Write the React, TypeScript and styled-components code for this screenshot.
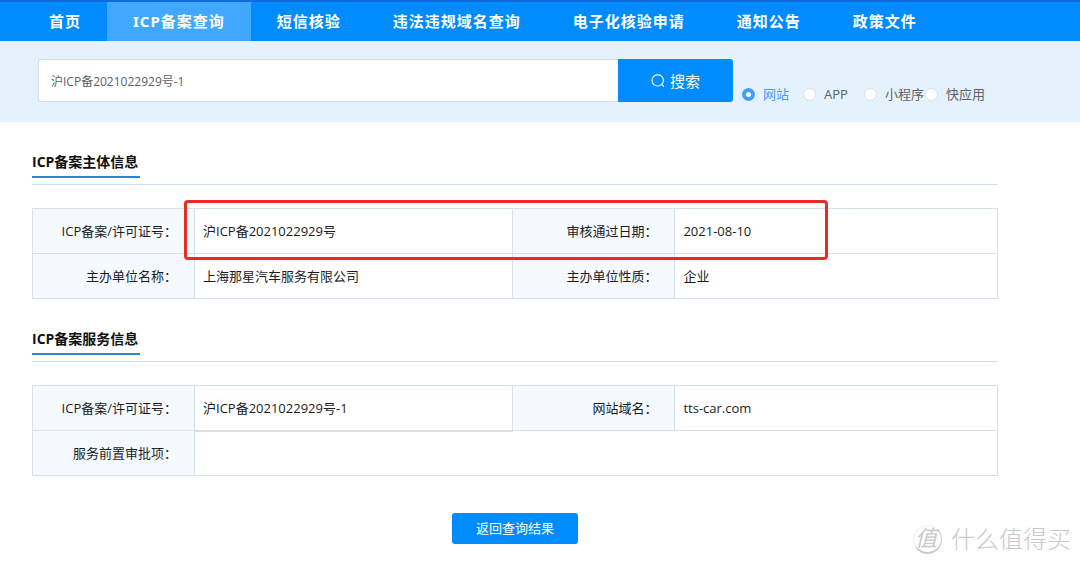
import React from 'react';
import styled, { createGlobalStyle } from 'styled-components';

const GlobalStyle = createGlobalStyle`
  *, *::before, *::after { box-sizing: border-box; }
  body {
    margin: 0;
    background: #fff;
    color: #1c1c1c;
    font: 13px/20px "Open Sans", "Noto Sans CJK SC", sans-serif;
  }
  button, input { font-family: inherit; }
`;

const Page = styled.div`
  position: relative;
  padding-bottom: 20px;
`;

const Nav = styled.nav`
  display: flex;
  height: 41px;
  padding-left: 23px;
  border-top: 2px solid #0c6cdc;
  background: #008cff;
`;

const NavLink = styled.a<{ $active?: boolean }>`
  padding: 0 26px;
  color: #fff;
  background: ${(p) => (p.$active ? '#40a9ff' : 'transparent')};
  font-family: "Noto Sans", "Noto Sans CJK SC", sans-serif;
  font-size: 15px;
  font-weight: 700;
  line-height: 38px;
  letter-spacing: 1px;
  white-space: nowrap;
  text-decoration: none;
`;

const SearchBar = styled.form`
  display: flex;
  align-items: flex-end;
  padding: 18px 94px 20px 38px;
  background: #e4f2fe;
`;

const SearchInput = styled.input`
  flex: 1;
  min-width: 0;
  height: 43px;
  padding: 0 12px;
  border: 1px solid #d9dde2;
  border-right: 0;
  border-radius: 3px 0 0 3px;
  background: #fff;
  color: #5c5f66;
  font-size: 12px;
`;

const SearchButton = styled.button`
  display: flex;
  align-items: center;
  justify-content: center;
  gap: 5px;
  width: 115px;
  height: 43px;
  padding: 0;
  border: 0;
  border-radius: 0 3px 3px 0;
  background: #008cff;
  color: #fff;
  font-size: 15px;
`;

const TypeGroup = styled.div`
  display: grid;
  grid-template-columns: repeat(4, 61px);
  margin-left: 9px;
  height: 16px;
`;

const TypeLabel = styled.label`
  display: flex;
  align-items: center;
  gap: 8px;
  color: #5f6266;
  line-height: 16px;
  white-space: nowrap;

  &:has(input:checked) { color: #409eff; }
`;

const Radio = styled.input`
  appearance: none;
  flex: none;
  width: 13px;
  height: 13px;
  margin: 0;
  border: 1px solid #dcdfe6;
  border-radius: 50%;
  background: #fff;

  &:checked {
    border: 4px solid #409eff;
  }
`;

const Content = styled.main`
  padding: 30px 82px 0 32px;
`;

const Section = styled.section`
  margin-bottom: 30px;
`;

const SectionHead = styled.header`
  display: flex;
  height: 33px;
  margin-bottom: 23px;
  border-bottom: 1px solid #cfdfea;
`;

const SectionTitle = styled.h2`
  height: 26px;
  margin: 0;
  padding-right: 2px;
  border-bottom: 2px solid #2f86cd;
  color: #111;
  font-size: 14px;
  font-weight: 700;
  line-height: 20px;
`;

const TableWrap = styled.div`
  position: relative;
`;

const InfoTable = styled.table`
  width: 100%;
  border: 1px solid #dfe3e6;
  border-collapse: collapse;
  table-layout: fixed;
`;

const LabelColumn = styled.col`
  width: 162px;
`;

const ValueColumn = styled.col<{ $width?: string }>`
  width: ${(p) => p.$width ?? 'auto'};
`;

const LabelCell = styled.th`
  height: 45px;
  padding: 0 17px 0 0;
  border: 1px solid #d6e1e9;
  background: #f4faff;
  font-weight: 400;
  text-align: right;
`;

const ValueCell = styled.td<{ $heavy?: boolean }>`
  padding: 0 8px;
  border: 1px solid #d6e1e9;
  border-bottom-width: ${(p) => (p.$heavy ? 2 : 1)}px;
`;

const Highlight = styled.div`
  position: absolute;
  top: -8px;
  right: 170px;
  left: 152px;
  height: 60px;
  border: 3px solid #ea2a24;
  border-radius: 4px;
  pointer-events: none;
`;

const Actions = styled.div`
  display: flex;
  justify-content: center;
  padding-top: 7px;
`;

const BackButton = styled.button`
  width: 126px;
  height: 31px;
  padding: 0 0 2px;
  border: 0;
  border-radius: 3px;
  background: #008cff;
  color: #fff;
  font-size: 13px;
`;

const Watermark = styled.div`
  position: absolute;
  right: 9px;
  bottom: 9px;
  display: flex;
  align-items: center;
  gap: 9px;
  color: #c9c9c9;
  font-size: 24px;
  font-weight: 300;
  line-height: 32px;
`;

const WatermarkMark = styled.span`
  width: 29px;
  height: 29px;
  border: 1px solid #f2f2f2;
  border-right-color: #c9c9c9;
  border-bottom: 2px solid #c9c9c9;
  border-radius: 50%;
  font-size: 22px;
  font-style: italic;
  font-weight: 400;
  line-height: 22px;
  text-align: center;
  text-indent: -3px;
`;

const navItems = ['首页', 'ICP备案查询', '短信核验', '违法违规域名查询', '电子化核验申请', '通知公告', '政策文件'];
const types = ['网站', 'APP', '小程序', '快应用'];

const SearchIcon = () => (
  <svg width="14" height="14" viewBox="0 0 14 14" fill="none" stroke="currentColor" strokeWidth="1.1" strokeLinecap="round" aria-hidden="true">
    <circle cx="6.7" cy="6.3" r="5.7" />
    <path d="M10.8 10.4 12.6 12.4" />
  </svg>
);

const Columns = () => (
  <colgroup>
    <LabelColumn />
    <ValueColumn $width="33%" />
    <LabelColumn />
    <ValueColumn />
  </colgroup>
);

export default function App() {
  return (
    <Page>
      <GlobalStyle />
      <Nav>
        {navItems.map((item) => (
          <NavLink key={item} href="#" $active={item === 'ICP备案查询'}>{item}</NavLink>
        ))}
      </Nav>
      <SearchBar onSubmit={(e: React.FormEvent) => e.preventDefault()}>
        <SearchInput aria-label="搜索" defaultValue="沪ICP备2021022929号-1" />
        <SearchButton type="submit"><SearchIcon />搜索</SearchButton>
        <TypeGroup role="radiogroup">
          {types.map((type) => (
            <TypeLabel key={type}>
              <Radio type="radio" name="type" defaultChecked={type === '网站'} />
              {type}
            </TypeLabel>
          ))}
        </TypeGroup>
      </SearchBar>
      <Content>
        <Section>
          <SectionHead><SectionTitle>ICP备案主体信息</SectionTitle></SectionHead>
          <TableWrap>
            <InfoTable>
              <Columns />
              <tbody>
                <tr>
                  <LabelCell scope="row">ICP备案/许可证号：</LabelCell>
                  <ValueCell>沪ICP备2021022929号</ValueCell>
                  <LabelCell scope="row">审核通过日期：</LabelCell>
                  <ValueCell>2021-08-10</ValueCell>
                </tr>
                <tr>
                  <LabelCell scope="row">主办单位名称：</LabelCell>
                  <ValueCell>上海那星汽车服务有限公司</ValueCell>
                  <LabelCell scope="row">主办单位性质：</LabelCell>
                  <ValueCell>企业</ValueCell>
                </tr>
              </tbody>
            </InfoTable>
            <Highlight />
          </TableWrap>
        </Section>
        <Section>
          <SectionHead><SectionTitle>ICP备案服务信息</SectionTitle></SectionHead>
          <InfoTable>
            <Columns />
            <tbody>
              <tr>
                <LabelCell scope="row">ICP备案/许可证号：</LabelCell>
                <ValueCell $heavy>沪ICP备2021022929号-1</ValueCell>
                <LabelCell scope="row">网站域名：</LabelCell>
                <ValueCell>tts-car.com</ValueCell>
              </tr>
              <tr>
                <LabelCell scope="row">服务前置审批项：</LabelCell>
                <ValueCell colSpan={3} />
              </tr>
            </tbody>
          </InfoTable>
        </Section>
        <Actions><BackButton type="button">返回查询结果</BackButton></Actions>
      </Content>
      <Watermark>
        <WatermarkMark>值</WatermarkMark>
        什么值得买
      </Watermark>
    </Page>
  );
}
